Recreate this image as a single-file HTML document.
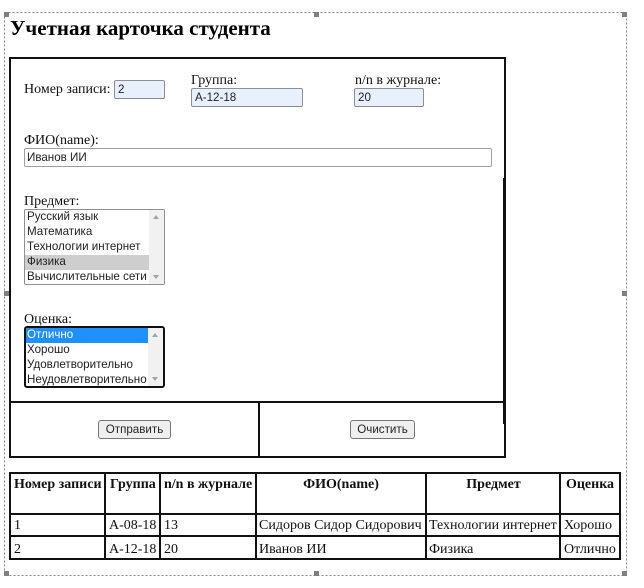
<!DOCTYPE html>
<html>
<head>
<meta charset="utf-8">
<style>
html,body{margin:0;padding:0;background:#fff;width:644px;height:588px;overflow:hidden}
body{position:relative;font-family:"Liberation Serif",serif;font-size:14px;color:#111}
.a{position:absolute}
.l{position:absolute;background:#111}
.t{position:absolute;white-space:nowrap;line-height:15px}
.h{position:absolute;width:5px;height:5px;background:#808080}
.d{position:absolute}
.i{position:absolute;box-sizing:border-box;border:1px solid #8f8f8f;border-radius:2px;font:11.6px/15px "Liberation Sans",sans-serif;padding:1px 3px;color:#222;background:#e8f0fe;border-bottom-color:#888;white-space:nowrap}
.s{position:absolute;box-sizing:border-box;border:1px solid #8f8f8f;border-radius:2px;background:#fff;font:11.6px/15px "Liberation Sans",sans-serif;color:#222;overflow:hidden}
.s div{height:15px;line-height:13px;padding-left:2px;white-space:nowrap;width:124px;box-sizing:border-box}
.sb{position:absolute;right:0;top:0;bottom:0;width:15px;background:#f1f1f1}
.up,.dn{position:absolute;left:4px;width:0;height:0;border-left:3.5px solid transparent;border-right:3.5px solid transparent}
.up{top:5px;border-bottom:4px solid #a3a3a3}
.dn{bottom:5px;border-top:4px solid #a3a3a3}
.b{position:absolute;box-sizing:border-box;border:1px solid #767676;border-radius:3px;background:#efefef;font:11.6px/17px "Liberation Sans",sans-serif;text-align:center;color:#222}
.th{font-weight:bold}
</style>
</head>
<body>
<!-- dashed selection box -->
<svg class="d" style="left:0;top:0" width="644" height="588">
<rect x="4.5" y="12.5" width="622" height="563" fill="none" stroke="#8a8a8a" stroke-width="1" stroke-dasharray="2 2"/>
</svg>
<div class="h" style="left:4px;top:12px"></div>
<div class="h" style="left:314px;top:12px"></div>
<div class="h" style="left:622px;top:12px"></div>
<div class="h" style="left:4px;top:291px"></div>
<div class="h" style="left:622px;top:291px"></div>
<div class="h" style="left:4px;top:571px"></div>
<div class="h" style="left:314px;top:571px"></div>
<div class="h" style="left:622px;top:571px"></div>

<div class="t" style="left:10px;top:17px;font-size:21px;line-height:23px;font-weight:bold;color:#000">Учетная карточка студента</div>

<!-- form frame -->
<div class="l" style="left:9px;top:57px;width:497px;height:2px"></div>
<div class="l" style="left:9px;top:57px;width:2px;height:401px"></div>
<div class="l" style="left:504px;top:57px;width:2px;height:401px"></div>
<div class="l" style="left:503px;top:178px;width:3px;height:246px"></div>
<div class="l" style="left:9px;top:401px;width:497px;height:2px"></div>
<div class="l" style="left:9px;top:456px;width:497px;height:2px"></div>
<div class="l" style="left:258px;top:401px;width:2px;height:57px"></div>

<div class="t" style="left:24px;top:82px">Номер записи:</div>
<div class="i" style="left:114px;top:80px;width:51px;height:19px">2</div>
<div class="t" style="left:191px;top:73px">Группа:</div>
<div class="i" style="left:191px;top:88px;width:112px;height:19px">А-12-18</div>
<div class="t" style="left:355px;top:73px">n/n в журнале:</div>
<div class="i" style="left:354px;top:88px;width:70px;height:19px">20</div>

<div class="t" style="left:24px;top:133px">ФИО(name):</div>
<div class="i" style="left:24px;top:148px;width:468px;height:19px;background:#fff;border-color:#a0a0a0;padding-left:2px">Иванов ИИ</div>

<div class="t" style="left:24px;top:194px">Предмет:</div>
<div class="s" style="left:24px;top:209px;width:141px;height:76px">
<div>Русский язык</div><div>Математика</div><div>Технологии интернет</div><div style="background:#cecece">Физика</div><div>Вычислительные сети</div>
<span class="sb"><span class="up"></span><span class="dn"></span></span>
</div>

<div class="t" style="left:24px;top:312px">Оценка:</div>
<div class="s" style="left:24px;top:326px;width:141px;height:62px;border:2px solid #111;border-radius:3px">
<div style="background:#1e90ff;color:#fff;width:123px;padding-left:1px">Отлично</div><div style="padding-left:1px">Хорошо</div><div style="padding-left:1px">Удовлетворительно</div><div style="padding-left:1px">Неудовлетворительно</div>
<span class="sb"><span class="up"></span><span class="dn"></span></span>
</div>

<div class="b" style="left:98px;top:420px;width:73px;height:19px">Отправить</div>
<div class="b" style="left:350px;top:420px;width:65px;height:19px">Очистить</div>

<!-- table lines -->
<div class="l" style="left:9px;top:472px;width:612px;height:2px"></div>
<div class="l" style="left:9px;top:513px;width:612px;height:2px"></div>
<div class="l" style="left:9px;top:535px;width:612px;height:2px"></div>
<div class="l" style="left:9px;top:558px;width:612px;height:2px"></div>
<div class="l" style="left:9px;top:472px;width:2px;height:88px"></div>
<div class="l" style="left:104px;top:472px;width:2px;height:88px"></div>
<div class="l" style="left:159px;top:472px;width:2px;height:88px"></div>
<div class="l" style="left:255px;top:472px;width:2px;height:88px"></div>
<div class="l" style="left:425px;top:472px;width:2px;height:88px"></div>
<div class="l" style="left:559px;top:472px;width:2px;height:88px"></div>
<div class="l" style="left:619px;top:472px;width:2px;height:88px"></div>

<div class="t th" style="left:14px;top:477px">Номер записи</div>
<div class="t th" style="left:110px;top:477px">Группа</div>
<div class="t th" style="left:164px;top:477px">n/n в журнале</div>
<div class="t th" style="left:257px;top:477px;width:168px;text-align:center">ФИО(name)</div>
<div class="t th" style="left:427px;top:477px;width:133px;text-align:center">Предмет</div>
<div class="t th" style="left:561px;top:477px;width:58px;text-align:center">Оценка</div>

<div class="t" style="left:14px;top:518px">1</div>
<div class="t" style="left:109px;top:518px">А-08-18</div>
<div class="t" style="left:164px;top:518px">13</div>
<div class="t" style="left:259px;top:518px">Сидоров Сидор Сидорович</div>
<div class="t" style="left:429px;top:518px">Технологии интернет</div>
<div class="t" style="left:564px;top:518px">Хорошо</div>

<div class="t" style="left:14px;top:542px">2</div>
<div class="t" style="left:109px;top:542px">А-12-18</div>
<div class="t" style="left:164px;top:542px">20</div>
<div class="t" style="left:259px;top:542px">Иванов ИИ</div>
<div class="t" style="left:429px;top:542px">Физика</div>
<div class="t" style="left:564px;top:542px">Отлично</div>
</body>
</html>
